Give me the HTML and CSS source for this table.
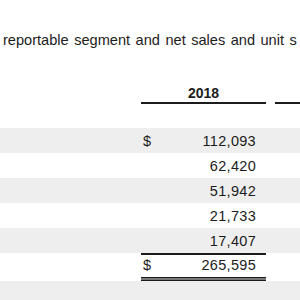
FILE: index.html
```html
<!DOCTYPE html>
<html lang="en">
<head>
<meta charset="utf-8">
<title>Net sales by reportable segment</title>
<link rel="stylesheet" href="styles.css">
</head>
<body>
<p class="intro">reportable segment and net sales and unit s</p>
<div class="table">
  <div class="row head">
    <div class="label"></div>
    <div class="col"><span class="year">2018</span></div>
    <div class="gap"></div>
    <div class="col next"></div>
  </div>
  <div class="row data shade">
    <div class="label"></div>
    <div class="col"><span class="cur">$</span><span class="num">112,093</span></div>
    <div class="gap"></div>
    <div class="next"></div>
  </div>
  <div class="row data">
    <div class="label"></div>
    <div class="col"><span class="cur"></span><span class="num">62,420</span></div>
    <div class="gap"></div>
    <div class="next"></div>
  </div>
  <div class="row data shade">
    <div class="label"></div>
    <div class="col"><span class="cur"></span><span class="num">51,942</span></div>
    <div class="gap"></div>
    <div class="next"></div>
  </div>
  <div class="row data">
    <div class="label"></div>
    <div class="col"><span class="cur"></span><span class="num">21,733</span></div>
    <div class="gap"></div>
    <div class="next"></div>
  </div>
  <div class="row data shade">
    <div class="label"></div>
    <div class="col"><span class="cur"></span><span class="num">17,407</span></div>
    <div class="gap"></div>
    <div class="next"></div>
  </div>
  <div class="row total">
    <div class="label"></div>
    <div class="col"><span class="cur">$</span><span class="num">265,595</span></div>
    <div class="gap"></div>
    <div class="next"></div>
  </div>
  <div class="row data shade">
    <div class="label"></div>
    <div class="col"></div>
    <div class="gap"></div>
    <div class="next"></div>
  </div>
</div>
</body>
</html>
```
FILE: styles.css
```css
html, body {
  margin: 0;
  padding: 0;
  background: #ffffff;
}
body {
  width: 300px;
  height: 300px;
  overflow: hidden;
  font-family: "Liberation Sans", Arial, sans-serif;
  color: #1c1c1c;
}
.intro {
  margin: 32px 0 0 3px;
  font-size: 14.6px;
  line-height: 17px;
  white-space: nowrap;
  word-spacing: 1.4px;
}
.row {
  display: grid;
  grid-template-columns: 141px 125px 9px 25px;
}
.head {
  margin-top: 36px;
  margin-bottom: 24px;
}
.head .col {
  text-align: center;
  font-weight: bold;
  font-size: 14px;
  line-height: 16px;
  padding-bottom: 1px;
  border-bottom: 2px solid #1c1c1c;
}
.data {
  height: 25px;
}
.shade {
  background: #eeeeee;
}
.data .col,
.total .col {
  display: flex;
  justify-content: space-between;
  font-size: 14.5px;
  letter-spacing: 0.3px;
}
.data .col {
  padding: 1px 10px 0 2px;
  line-height: 24px;
}
.total .col {
  padding: 0 10px 1px 2px;
  line-height: 21px;
  border-top: 2px solid #1c1c1c;
  border-bottom: 4px double #1c1c1c;
  background-image: linear-gradient(to top, #7a7a7a 4px, transparent 4px);
  background-origin: border-box;
  background-repeat: no-repeat;
}
```
